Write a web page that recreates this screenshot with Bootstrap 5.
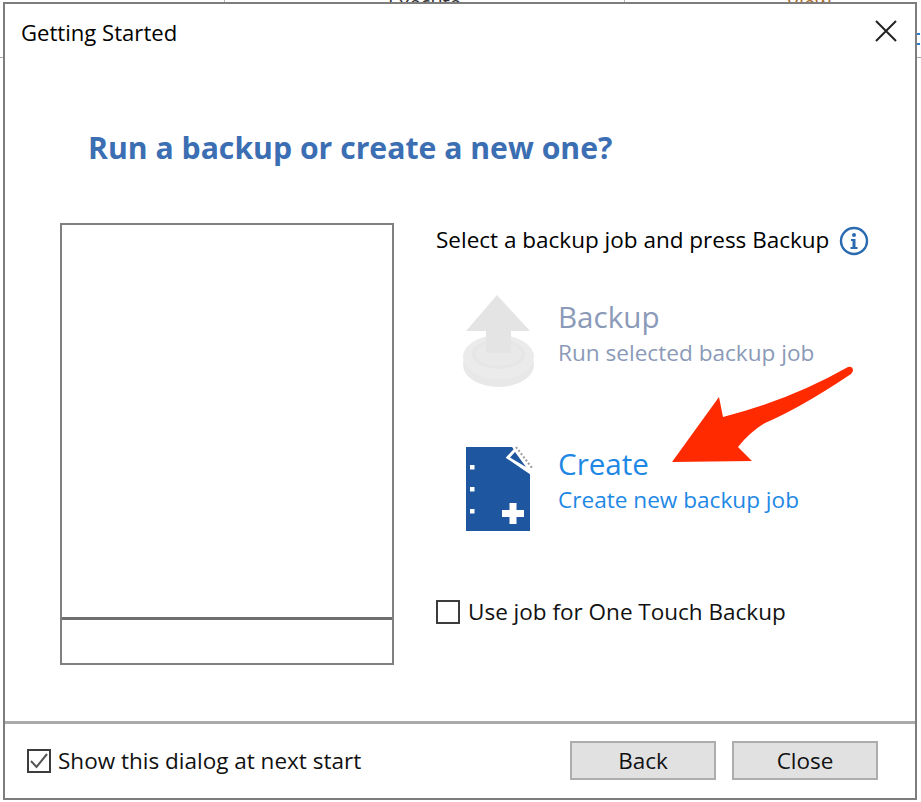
<!DOCTYPE html>
<html lang="en">
<head>
<meta charset="utf-8">
<title>Getting Started</title>
<link href="https://cdn.jsdelivr.net/npm/bootstrap@5.3.0/dist/css/bootstrap.min.css" rel="stylesheet">
<style>
html,body{height:100%;}
body{margin:0;background-color:#fff;background-image:linear-gradient(#a9a9a9,#a9a9a9),linear-gradient(#2a7fd0,#2a7fd0),linear-gradient(#2a7fd0,#2a7fd0);background-position:0 57px,917px 33px,917px 43px;background-size:100% 1px,3px 2px,3px 2px;background-repeat:no-repeat;font-family:"Open Sans","Noto Sans",sans-serif;color:#111;overflow:hidden;}
.stage{position:relative;width:921px;height:802px;}
.topstrip{height:2px;overflow:hidden;font-size:20px;line-height:8px;color:#333;}
.topstrip .cell{height:2px;border-right:1px solid #b5b5b5;}
.cell-a{width:225px;}
.cell-b{width:400px;text-align:center;}
.cell-c{flex:1;padding-left:162px;border-right:0!important;color:#a76a2c;}
.dlg{margin:0 4px 0 3px;height:798px;background:#fff;border:2px solid #7d7d7d;}
.dlg-top{height:60px;}
.dlg-title{padding:10px 0 0 16px;font-size:22.1px;line-height:36px;color:#000;}
.dlg-x{width:26px;height:26px;margin:14px 16px 0 0;}
.dlg-body{height:657px;padding-left:55px;}
.dlg-head{margin:0 0 0 28px;padding-top:62px;height:159px;font-size:30.2px;line-height:44px;font-weight:700;color:#3b6eb2;white-space:nowrap;}
.dlg-cols{gap:42px;}
.jobbox{width:334px;height:442px;border:2px solid #808080;}
.jobbox-main{height:395px;border-bottom:3px solid #6f6f6f;}
.rightcol{font-size:22.5px;}
.sel-row{height:34px;line-height:34px;color:#000;}
.info-ic{width:30px;height:30px;margin:1px 0 0 10px;}
.act{height:100px;}
.act-ic{width:122px;flex:none;}
.act-pic{margin-left:30px;}
.act-pic-b{margin-left:27px;margin-top:1px;}
.act-txt-off{padding-top:4px;}
.act-t{font-size:29.6px;line-height:39px;}
.act-s{font-size:22.6px;line-height:33px;}
.act-off{color:#8b9ab8;margin-top:36px;}
.act-on{color:#1e88e5;margin-top:51px;}
.tick{width:24px;height:24px;border:2px solid #3c3c3c;background:#fff;flex:none;}
.touch-row{margin-top:55px;gap:8px;height:26px;line-height:26px;color:#111;}
.dlg-foot{height:77px;border-top:3px solid #aaa;padding:17px 37px 0 22px;font-size:22.5px;}
.show-row{gap:7px;height:40px;}
.btn.winbtn{width:146px;height:39px;padding:0;border-radius:0;background:#e1e1e1;border:2px solid #adadad;color:#111;font-size:22.5px;line-height:35px;}
.arrow{position:absolute;left:660px;top:360px;width:200px;height:110px;}
</style>
</head>
<body>
<div class="stage">
  <div class="topstrip d-flex">
    <div class="cell cell-a"></div>
    <div class="cell cell-b">Execute</div>
    <div class="cell cell-c">View</div>
  </div>
  <div class="dlg d-flex flex-column">
    <div class="dlg-top d-flex justify-content-between">
      <div class="dlg-title">Getting Started</div>
      <svg class="dlg-x" viewBox="0 0 26 26"><path d="M3 3L23 23M23 3L3 23" stroke="#222" stroke-width="2" fill="none"/></svg>
    </div>
    <div class="dlg-body">
      <div class="dlg-head">Run a backup or create a new one?</div>
      <div class="d-flex dlg-cols">
        <div class="jobbox"><div class="jobbox-main"></div></div>
        <div class="rightcol flex-grow-1">
          <div class="sel-row d-flex align-items-center">
            <span>Select a backup job and press Backup</span>
            <svg class="info-ic" viewBox="0 0 30 30"><circle cx="15" cy="15" r="13" fill="none" stroke="#2a6ab0" stroke-width="2.4"/><circle cx="15" cy="9" r="2" fill="#2a6ab0"/><path d="M12 13h4.500v8h2v2h-7v-2h2v-6h-1.500z" fill="#2a6ab0"/></svg>
          </div>
          <div class="act act-off d-flex">
            <div class="act-ic">
              <svg width="72" height="94" viewBox="464 294 72 94" class="d-block act-pic-b"><ellipse cx="499.500" cy="365" rx="35.500" ry="22" fill="#e8e8e8"/><ellipse cx="499.500" cy="357" rx="35.500" ry="22" fill="#ebebeb"/><ellipse cx="499.500" cy="354" rx="27" ry="15" fill="#e6e6e6"/><ellipse cx="499.500" cy="354" rx="23" ry="12" fill="#e9e9e9"/><path d="M498 295L531 331H512V353H487V331H467Z" fill="#e4e4e4"/></svg>
            </div>
            <div class="act-txt-off"><div class="act-t">Backup</div><div class="act-s">Run selected backup job</div></div>
          </div>
          <div class="act act-on d-flex">
            <div class="act-ic">
              <svg width="70" height="88" viewBox="466 444 70 88" class="d-block act-pic"><path d="M466 447H512L530 472V531H466Z" fill="#1f56a0"/><path d="M505.700 457.700L515.700 447L532.300 468.300L530 474.300Z" fill="#fff"/><path d="M510 457.500L515 452L526 467Z" fill="#1f56a0"/><path d="M516 447L532.300 468.300" fill="none" stroke="#9a9a9a" stroke-width="2" stroke-dasharray="2 2"/><rect x="470" y="465" width="4.500" height="4.500" fill="#fff"/><rect x="470" y="487" width="4.500" height="4.500" fill="#fff"/><rect x="470" y="509" width="4.500" height="4.500" fill="#fff"/><path d="M509.500 503h7v7h7.500v7h-7.500v7h-7v-7H502v-7h7.500z" fill="#fff"/></svg>
            </div>
            <div><div class="act-t">Create</div><div class="act-s">Create new backup job</div></div>
          </div>
          <div class="touch-row d-flex align-items-center"><span class="tick"></span><span>Use job for One Touch Backup</span></div>
        </div>
      </div>
    </div>
    <div class="dlg-foot d-flex justify-content-between">
      <div class="show-row d-flex align-items-center">
        <span class="tick d-flex align-items-center justify-content-center"><svg width="20" height="20" viewBox="0 0 20 20"><path d="M2 10l5.500 6L18 3" fill="none" stroke="#555" stroke-width="2"/></svg></span>
        <span>Show this dialog at next start</span>
      </div>
      <div class="d-flex gap-3">
        <button type="button" class="btn winbtn">Back</button>
        <button type="button" class="btn winbtn">Close</button>
      </div>
    </div>
  </div>
  <svg class="arrow" viewBox="660 360 200 110"><path d="M848 367Q853 366 853 371Q852 374 848 376Q800 408 765 423Q750 432 738 447L752 461L672 462L719 397L723 417Q790 400 848 367Z" fill="#ff2a00"/></svg>
</div>
</body>
</html>
